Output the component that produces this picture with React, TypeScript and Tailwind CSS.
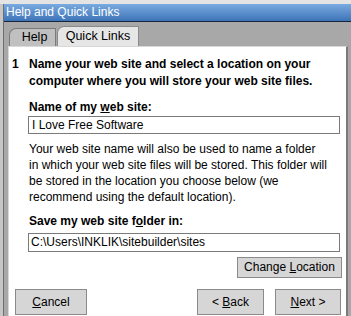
export default function App() {
  return (
    <div className="w-[351px] h-[316px] overflow-hidden bg-[#dcdcdc] font-['Liberation_Sans',Arial,sans-serif] text-[12px] text-black flex flex-col">
      {/* top strip */}
      <div className="h-[4px] shrink-0 bg-[#e4e4e4]" />

      <div className="flex flex-1 min-h-0">
        {/* left frame */}
        <div className="w-[4px] shrink-0 bg-[#c6c6c6] border-r border-[#6e6e6e]" />

        <div className="flex-1 flex flex-col min-w-0 bg-[#a8a8a8]">
          {/* title bar */}
          <div className="h-[18px] shrink-0 bg-gradient-to-b from-[#7aaae0] to-[#3d74b8] border-b border-[#17263a] text-white text-[12px] leading-[17px] pl-[2px]">
            Help and Quick Links
          </div>

          {/* tabs */}
          <div className="h-[24px] shrink-0 flex items-end pl-[5px] gap-[1px]">
            <div className="h-[18px] w-[47px] rounded-tl-[7px] border border-b-0 border-[#7a7a7a] bg-[#c0c0c0] flex items-center justify-center pl-[4px] text-[12.5px]">
              Help
            </div>
            <div className="h-[20px] w-[82px] rounded-tl-[7px] border border-b-0 border-[#8a8a8a] bg-[#e6e6e6] flex items-center justify-center text-[12.5px]">
              Quick Links
            </div>
          </div>

          {/* panel */}
          <div className="flex-1 ml-[4px] mr-[3px] bg-white border-l border-t border-r-2 border-[#d8d8d8] border-r-[#7a7a7a] pt-[9px]">
            <div className="flex">
              <div className="w-[20px] pl-[3px] font-bold leading-[17px]">1</div>
              <div className="flex-1 pr-[6px] whitespace-nowrap">
                <div className="font-bold leading-[17px]">
                  Name your web site and select a location on your
                  <br />
                  computer where you will store your web site files.
                </div>
                <div className="font-bold mt-[9px] leading-[17px]">
                  Name of my <span className="underline">w</span>eb site:
                </div>
                <div className="mt-[0px] -ml-[1px] h-[18px] border border-[#7a7a7a] bg-white pl-[3px] leading-[16px]">
                  I Love Free Software
                </div>
                <div className="mt-[7px] leading-[16px]">
                  Your web site name will also be used to name a folder
                  <br />
                  in which your web site files will be stored. This folder will
                  <br />
                  be stored in the location you choose below (we
                  <br />
                  recommend using the default location).
                </div>
                <div className="font-bold mt-[8px] leading-[17px]">
                  Save my web site f<span className="underline">o</span>lder in:
                </div>
                <div className="mt-[3px] -ml-[1px] h-[19px] border border-[#7a7a7a] bg-white pl-[2px] leading-[17px]">
                  C:\Users\INKLIK\sitebuilder\sites
                </div>
                <div className="flex justify-end mt-[5px] -mr-[2px]">
                  <button className="h-[21px] w-[105px] bg-[#d6d6d6] border border-[#8a8a8a] leading-[19px]">
                    Change <span className="underline">L</span>ocation
                  </button>
                </div>
              </div>
            </div>
            <div className="flex mt-[11px] pl-[6px] pr-[5px]">
              <button className="h-[26px] w-[72px] bg-[#d6d6d6] border border-[#8a8a8a]">
                <span className="underline">C</span>ancel
              </button>
              <div className="flex-1" />
              <button className="h-[26px] w-[67px] bg-[#d6d6d6] border border-[#8a8a8a]">
                &lt; <span className="underline">B</span>ack
              </button>
              <button className="ml-[11px] h-[26px] w-[66px] bg-[#d6d6d6] border border-[#8a8a8a]">
                <span className="underline">N</span>ext &gt;
              </button>
            </div>
          </div>
        </div>
      </div>
    </div>
  );
}
